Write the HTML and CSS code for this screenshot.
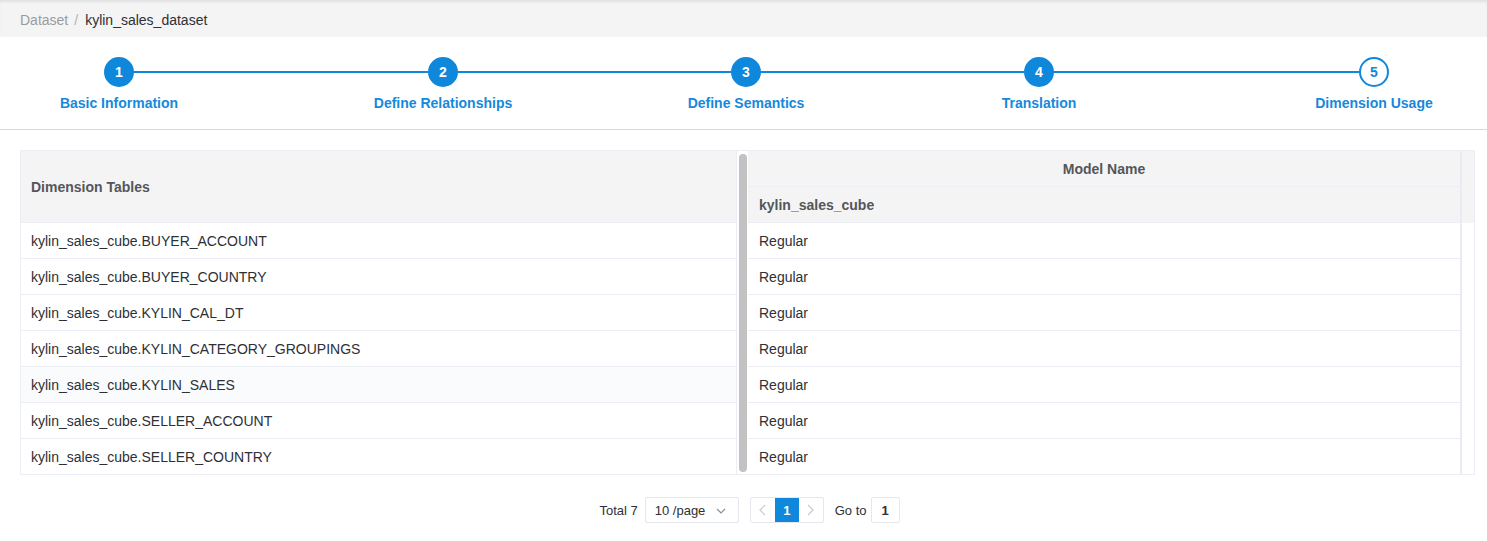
FILE: index.html
```html
<!DOCTYPE html>
<html>
<head>
<meta charset="utf-8">
<link rel="stylesheet" href="styles.css">
</head>
<body>
<div class="breadcrumb">
  <span class="crumb-muted">Dataset</span>
  <span class="crumb-sep">/</span>
  <span class="crumb-current">kylin_sales_dataset</span>
</div>
<div class="steps">
  <div class="step"><div class="circle">1</div><div class="label">Basic Information</div></div>
  <div class="step"><div class="circle">2</div><div class="label">Define Relationships</div></div>
  <div class="step"><div class="circle">3</div><div class="label">Define Semantics</div></div>
  <div class="step"><div class="circle">4</div><div class="label">Translation</div></div>
  <div class="step"><div class="circle current">5</div><div class="label">Dimension Usage</div></div>
</div>
<div class="content">
  <div class="table">
    <div class="pane left">
      <div class="head-cell tall">Dimension Tables</div>
      <div class="cell">kylin_sales_cube.BUYER_ACCOUNT</div>
      <div class="cell">kylin_sales_cube.BUYER_COUNTRY</div>
      <div class="cell">kylin_sales_cube.KYLIN_CAL_DT</div>
      <div class="cell">kylin_sales_cube.KYLIN_CATEGORY_GROUPINGS</div>
      <div class="cell hover">kylin_sales_cube.KYLIN_SALES</div>
      <div class="cell">kylin_sales_cube.SELLER_ACCOUNT</div>
      <div class="cell last">kylin_sales_cube.SELLER_COUNTRY</div>
    </div>
    <div class="scroll"><div class="thumb"></div></div>
    <div class="pane right">
      <div class="head-cell group">Model Name</div>
      <div class="head-cell sub">kylin_sales_cube</div>
      <div class="cell">Regular</div>
      <div class="cell">Regular</div>
      <div class="cell">Regular</div>
      <div class="cell">Regular</div>
      <div class="cell">Regular</div>
      <div class="cell">Regular</div>
      <div class="cell last">Regular</div>
    </div>
    <div class="gutter"><div class="gutter-head"></div></div>
  </div>
  <div class="pager">
    <span class="total">Total 7</span>
    <div class="sizes"><span>10 /page</span>
      <svg class="caret" width="10" height="6" viewBox="0 0 10 6"><path d="M1 1 L5 5 L9 1" fill="none" stroke="#8a8f99" stroke-width="1.2"/></svg>
    </div>
    <div class="pages">
      <span class="pbtn"><svg width="7" height="12" viewBox="0 0 7 12"><path d="M6 1 L1 6 L6 11" fill="none" stroke="#c7cad1" stroke-width="1.2"/></svg></span>
      <span class="pbtn active">1</span>
      <span class="pbtn"><svg width="7" height="12" viewBox="0 0 7 12"><path d="M1 1 L6 6 L1 11" fill="none" stroke="#c7cad1" stroke-width="1.2"/></svg></span>
    </div>
    <span class="goto">Go to</span>
    <div class="goinput">1</div>
  </div>
</div>
</body>
</html>
```
FILE: styles.css
```css
* { box-sizing: border-box; }
body {
  margin: 0;
  font-family: "Liberation Sans", Arial, sans-serif;
  font-size: 14px;
  color: #2d3036;
  background: #fff;
}
.breadcrumb {
  height: 37px;
  background: #f4f4f5;
  box-shadow: inset 0 3px 3px -1px rgba(0,0,0,0.08);
  display: flex;
  align-items: center;
  padding: 2px 0 0 20px;
  font-size: 14px;
}
.crumb-muted { color: #9a9ca1; }
.crumb-sep { color: #b0b3b8; margin: 0 7px 0 6px; }
.crumb-current { color: #2d3036; }

.steps {
  position: relative;
  display: grid;
  grid-template-columns: 184px 464px 142px 444px 226px;
  padding: 20px 0 0 27px;
  height: 93px;
  border-bottom: 1px solid #d8d9dc;
}
.steps::before {
  content: "";
  position: absolute;
  left: 119px;
  right: 113px;
  top: 34px;
  height: 2px;
  background: #0f88dc;
}
.step {
  position: relative;
  display: flex;
  flex-direction: column;
  align-items: center;
}
.circle {
  width: 30px;
  height: 30px;
  border-radius: 50%;
  background: #0f88dc;
  color: #fff;
  font-weight: bold;
  font-size: 14px;
  display: flex;
  align-items: center;
  justify-content: center;
  border: 2px solid #0f88dc;
}
.circle.current {
  background: #fff;
  color: #0f88dc;
}
.label {
  margin-top: 7px;
  color: #1589dc;
  font-weight: bold;
  font-size: 14px;
  line-height: 18px;
  white-space: nowrap;
}

.content { padding: 20px 12px 0 20px; }
.table {
  display: flex;
  border: 1px solid #ebeef5;
  width: 1455px;
}
.pane { display: flex; flex-direction: column; }
.pane.left { width: 715px; }
.pane.right { flex: 1; }
.head-cell {
  background: #f4f4f4;
  color: #54565b;
  font-weight: bold;
  display: flex;
  align-items: center;
  padding: 0 10px;
  border-bottom: 1px solid #ebeef5;
}
.head-cell.tall { height: 72px; }
.head-cell.group { height: 36px; justify-content: center; }
.head-cell.sub { height: 36px; padding-left: 11px; }
.cell {
  height: 36px;
  display: flex;
  align-items: center;
  padding: 1px 10px 0 10px;
  border-bottom: 1px solid #ebeef5;
}
.pane.right .cell { padding-left: 11px; }
.cell.last { border-bottom: none; height: 35px; }
.cell.hover { background: #fafbfd; }
.scroll {
  width: 12px;
  padding: 3px 2px 2px 2px;
  background: #fff;
  border-left: 1px solid #ebeef5;
}
.thumb {
  width: 8px;
  height: 100%;
  border-radius: 4px;
  background: #c2c2c2;
}
.gutter {
  width: 14px;
  border-left: 2px solid #e9ecf3;
}
.gutter-head {
  height: 72px;
  background: #f4f4f4;
}

.pager {
  display: flex;
  align-items: center;
  justify-content: center;
  margin-top: 22px;
  padding-left: 4px;
  font-size: 13px;
  color: #2d3036;
}
.total { margin-right: 7px; }
.sizes {
  width: 94px;
  height: 26px;
  border: 1px solid #e4e7ed;
  border-radius: 2px;
  display: flex;
  align-items: center;
  justify-content: space-between;
  padding: 0 12px 0 9px;
  font-size: 13px;
}
.caret { margin-top: 1px; }
.pages {
  display: flex;
  margin-left: 11px;
  border: 1px solid #e4e7ed;
  border-radius: 2px;
  height: 26px;
}
.pbtn {
  width: 24px;
  height: 24px;
  display: flex;
  align-items: center;
  justify-content: center;
  font-weight: bold;
}
.pbtn.active { background: #0f88dc; color: #fff; }
.goto { margin-left: 11px; margin-right: 4px; }
.goinput {
  width: 29px;
  height: 26px;
  border: 1px solid #e4e7ed;
  border-radius: 2px;
  display: flex;
  align-items: center;
  justify-content: center;
  font-weight: bold;
}
```
